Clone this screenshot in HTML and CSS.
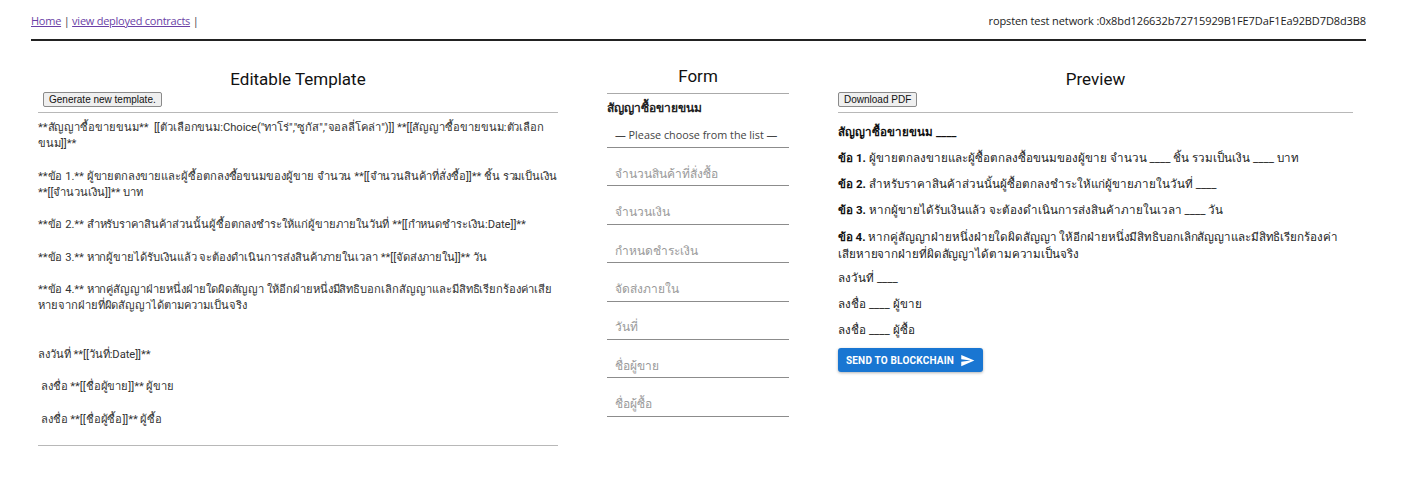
FILE: index.html
```html
<!DOCTYPE html>
<html lang="th">
<head>
<meta charset="utf-8">
<title>Template</title>
<link rel="stylesheet" href="styles.css">
</head>
<body>
<header class="topbar">
  <nav class="nav"><a href="#" class="lnk">Home</a> | <a href="#" class="lnk">view deployed contracts</a> |</nav>
  <div class="net">ropsten test network :0x8bd126632b72715929B1FE7DaF1Ea92BD7D8d3B8</div>
</header>
<main class="main">
  <section class="col col-tpl">
    <h2 class="title">Editable Template</h2>
    <button class="mini-btn">Generate new template.</button>
    <hr class="rule">
    <div class="tpl-text">**สัญญาซื้อขายขนม**  [[ตัวเลือกขนม:Choice("ทาโร่","ซูกัส","จอลลี่โคล่า")]] **[[สัญญาซื้อขายขนม:ตัวเลือกขนม]]**

**ข้อ 1.** ผู้ขายตกลงขายและผู้ซื้อตกลงซื้อขนมของผู้ขาย จำนวน **[[จำนวนสินค้าที่สั่งซื้อ]]** ชิ้น รวมเป็นเงิน **[[จำนวนเงิน]]** บาท

**ข้อ 2.** สำหรับราคาสินค้าส่วนนั้นผู้ซื้อตกลงชำระให้แก่ผู้ขายภายในวันที่ **[[กำหนดชำระเงิน:Date]]**

**ข้อ 3.** หากผู้ขายได้รับเงินแล้ว จะต้องดำเนินการส่งสินค้าภายในเวลา **[[จัดส่งภายใน]]** วัน

**ข้อ 4.** หากคู่สัญญาฝ่ายหนึ่งฝ่ายใดผิดสัญญา ให้อีกฝ่ายหนึ่งมีสิทธิบอกเลิกสัญญาและมีสิทธิเรียกร้องค่าเสียหายจากฝ่ายที่ผิดสัญญาได้ตามความเป็นจริง


ลงวันที่ **[[วันที่:Date]]**

 ลงชื่อ **[[ชื่อผู้ขาย]]** ผู้ขาย

 ลงชื่อ **[[ชื่อผู้ซื้อ]]** ผู้ซื้อ
</div>
    <hr class="rule rule-end">
  </section>
  <section class="col col-form">
    <h2 class="title title-form">Form</h2>
    <hr class="rule rule-form">
    <div class="form-label">สัญญาซื้อขายขนม</div>
    <div class="field field-first"><div class="select">— Please choose from the list —</div></div>
    <div class="field"><input class="inp" placeholder="จำนวนสินค้าที่สั่งซื้อ"></div>
    <div class="field"><input class="inp" placeholder="จำนวนเงิน"></div>
    <div class="field"><input class="inp" placeholder="กำหนดชำระเงิน"></div>
    <div class="field"><input class="inp" placeholder="จัดส่งภายใน"></div>
    <div class="field"><input class="inp" placeholder="วันที่"></div>
    <div class="field"><input class="inp" placeholder="ชื่อผู้ขาย"></div>
    <div class="field"><input class="inp" placeholder="ชื่อผู้ซื้อ"></div>
  </section>
  <section class="col col-prev">
    <h2 class="title">Preview</h2>
    <button class="mini-btn">Download PDF</button>
    <hr class="rule">
    <div class="prev">
      <p class="ph"><b>สัญญาซื้อขายขนม ____</b></p>
      <p><b>ข้อ 1.</b> ผู้ขายตกลงขายและผู้ซื้อตกลงซื้อขนมของผู้ขาย จำนวน ____ ชิ้น รวมเป็นเงิน ____ บาท</p>
      <p><b>ข้อ 2.</b> สำหรับราคาสินค้าส่วนนั้นผู้ซื้อตกลงชำระให้แก่ผู้ขายภายในวันที่ ____</p>
      <p><b>ข้อ 3.</b> หากผู้ขายได้รับเงินแล้ว จะต้องดำเนินการส่งสินค้าภายในเวลา ____ วัน</p>
      <p class="p4"><b>ข้อ 4.</b> หากคู่สัญญาฝ่ายหนึ่งฝ่ายใดผิดสัญญา ให้อีกฝ่ายหนึ่งมีสิทธิบอกเลิกสัญญาและมีสิทธิเรียกร้องค่าเสียหายจากฝ่ายที่ผิดสัญญาได้ตามความเป็นจริง</p>
      <p>ลงวันที่ ____</p>
      <p>ลงชื่อ ____ ผู้ขาย</p>
      <p>ลงชื่อ ____ ผู้ซื้อ</p>
    </div>
    <button class="send-btn"><span class="send-txt">SEND TO BLOCKCHAIN</span>
      <svg class="send-ico" viewBox="0 0 24 24" width="15" height="15"><path d="M2.01 21L23 12 2.01 3 2 10l15 2-15 2z" fill="#fff"/></svg>
    </button>
  </section>
</main>
</body>
</html>
```
FILE: styles.css
```css
* { box-sizing: border-box; }
body {
  margin: 0;
  font-family: Roboto, "Noto Sans", sans-serif;
  color: #222;
  background: #fff;
}
.topbar {
  margin: 0 44px 0 31px;
  padding-top: 13px;
  height: 41px;
  border-bottom: 2px solid #222;
  display: flex;
  justify-content: space-between;
  font-family: "Open Sans", "Noto Sans", sans-serif;
  font-size: 11px;
  line-height: 16px;
  color: #222;
}
.nav { color: #444; letter-spacing: -0.25px; }
.lnk { color: #6b3fa6; text-decoration: underline; }
.net { letter-spacing: -0.1px; }
.main {
  display: grid;
  grid-template-columns: 520px 182px 515px;
  column-gap: 49px;
  margin-left: 38px;
  padding-top: 28px;
  align-items: start;
}
.col { display: flex; flex-direction: column; align-items: flex-start; }
.title {
  align-self: stretch;
  text-align: center;
  margin: 0;
  font-weight: 400;
  font-size: 17px;
  line-height: 21px;
  color: #111;
}
.title-form { margin-top: -3px; }
.mini-btn {
  margin: 2px 0 0 5px;
  height: 15px;
  padding: 0 5px;
  font-family: "Liberation Sans", Arial, sans-serif;
  font-size: 10px;
  line-height: 13px;
  color: #111;
  background: #efefef;
  border: 1px solid #8a8a8a;
  border-radius: 2px;
}
.col-prev .mini-btn { margin-left: 0; }
.rule {
  align-self: stretch;
  margin: 5px 0 0;
  border: 0;
  border-top: 1px solid #b8b8b8;
  height: 0;
}
.rule-form { margin-top: 6px; border-top-color: #aaa; }
.tpl-text {
  white-space: pre-wrap;
  font-size: 11.2px;
  line-height: 16.2px;
  color: #333;
  margin-top: 7px;
  width: 520px;
  letter-spacing: -0.05px;
}
.rule-end { margin-top: 17px; }
.form-label {
  font-weight: 700;
  font-size: 12px;
  line-height: 16px;
  margin-top: 6px;
  color: #222;
}
.field {
  align-self: stretch;
  height: 38.4px;
  display: flex;
  align-items: flex-end;
}
.field.field-first { height: 32px; }
.select, .inp {
  width: 100%;
  height: 24px;
  border: 0;
  border-bottom: 1.5px solid #8c8c8c;
  padding: 0 0 0 8px;
  font-size: 12px;
  line-height: 22px;
  background: transparent;
  outline: none;
}
.select {
  flex: none;
  font-family: "Open Sans", "Noto Sans", sans-serif;
  font-size: 10.8px;
  color: #444;
  white-space: nowrap;
}
.inp { font-family: Roboto, "Noto Sans", sans-serif; }
.inp::placeholder { color: #9a9a9a; }
.prev {
  margin-top: 12px;
  font-size: 11.6px;
  line-height: 15.5px;
  color: #222;
}
.prev p { margin: 0 0 10.5px; }
.prev .p4 { letter-spacing: -0.1px; line-height: 16.5px; margin-bottom: 9px; }
.prev b { font-weight: 700; color: #111; }
.send-btn {
  margin-top: -1px;
  height: 24px;
  width: 145px;
  display: flex;
  align-items: center;
  justify-content: center;
  gap: 6px;
  background: #1976d2;
  color: #fff;
  border: 0;
  border-radius: 3px;
  font-family: Roboto, sans-serif;
  font-weight: 700;
  font-size: 10px;
  letter-spacing: 0.2px;
  box-shadow: 0 1px 3px rgba(0,0,0,0.3);
  padding: 0 6px;
  white-space: nowrap;
}
.send-txt { white-space: nowrap; }
.send-ico { display: block; flex: none; }
```
